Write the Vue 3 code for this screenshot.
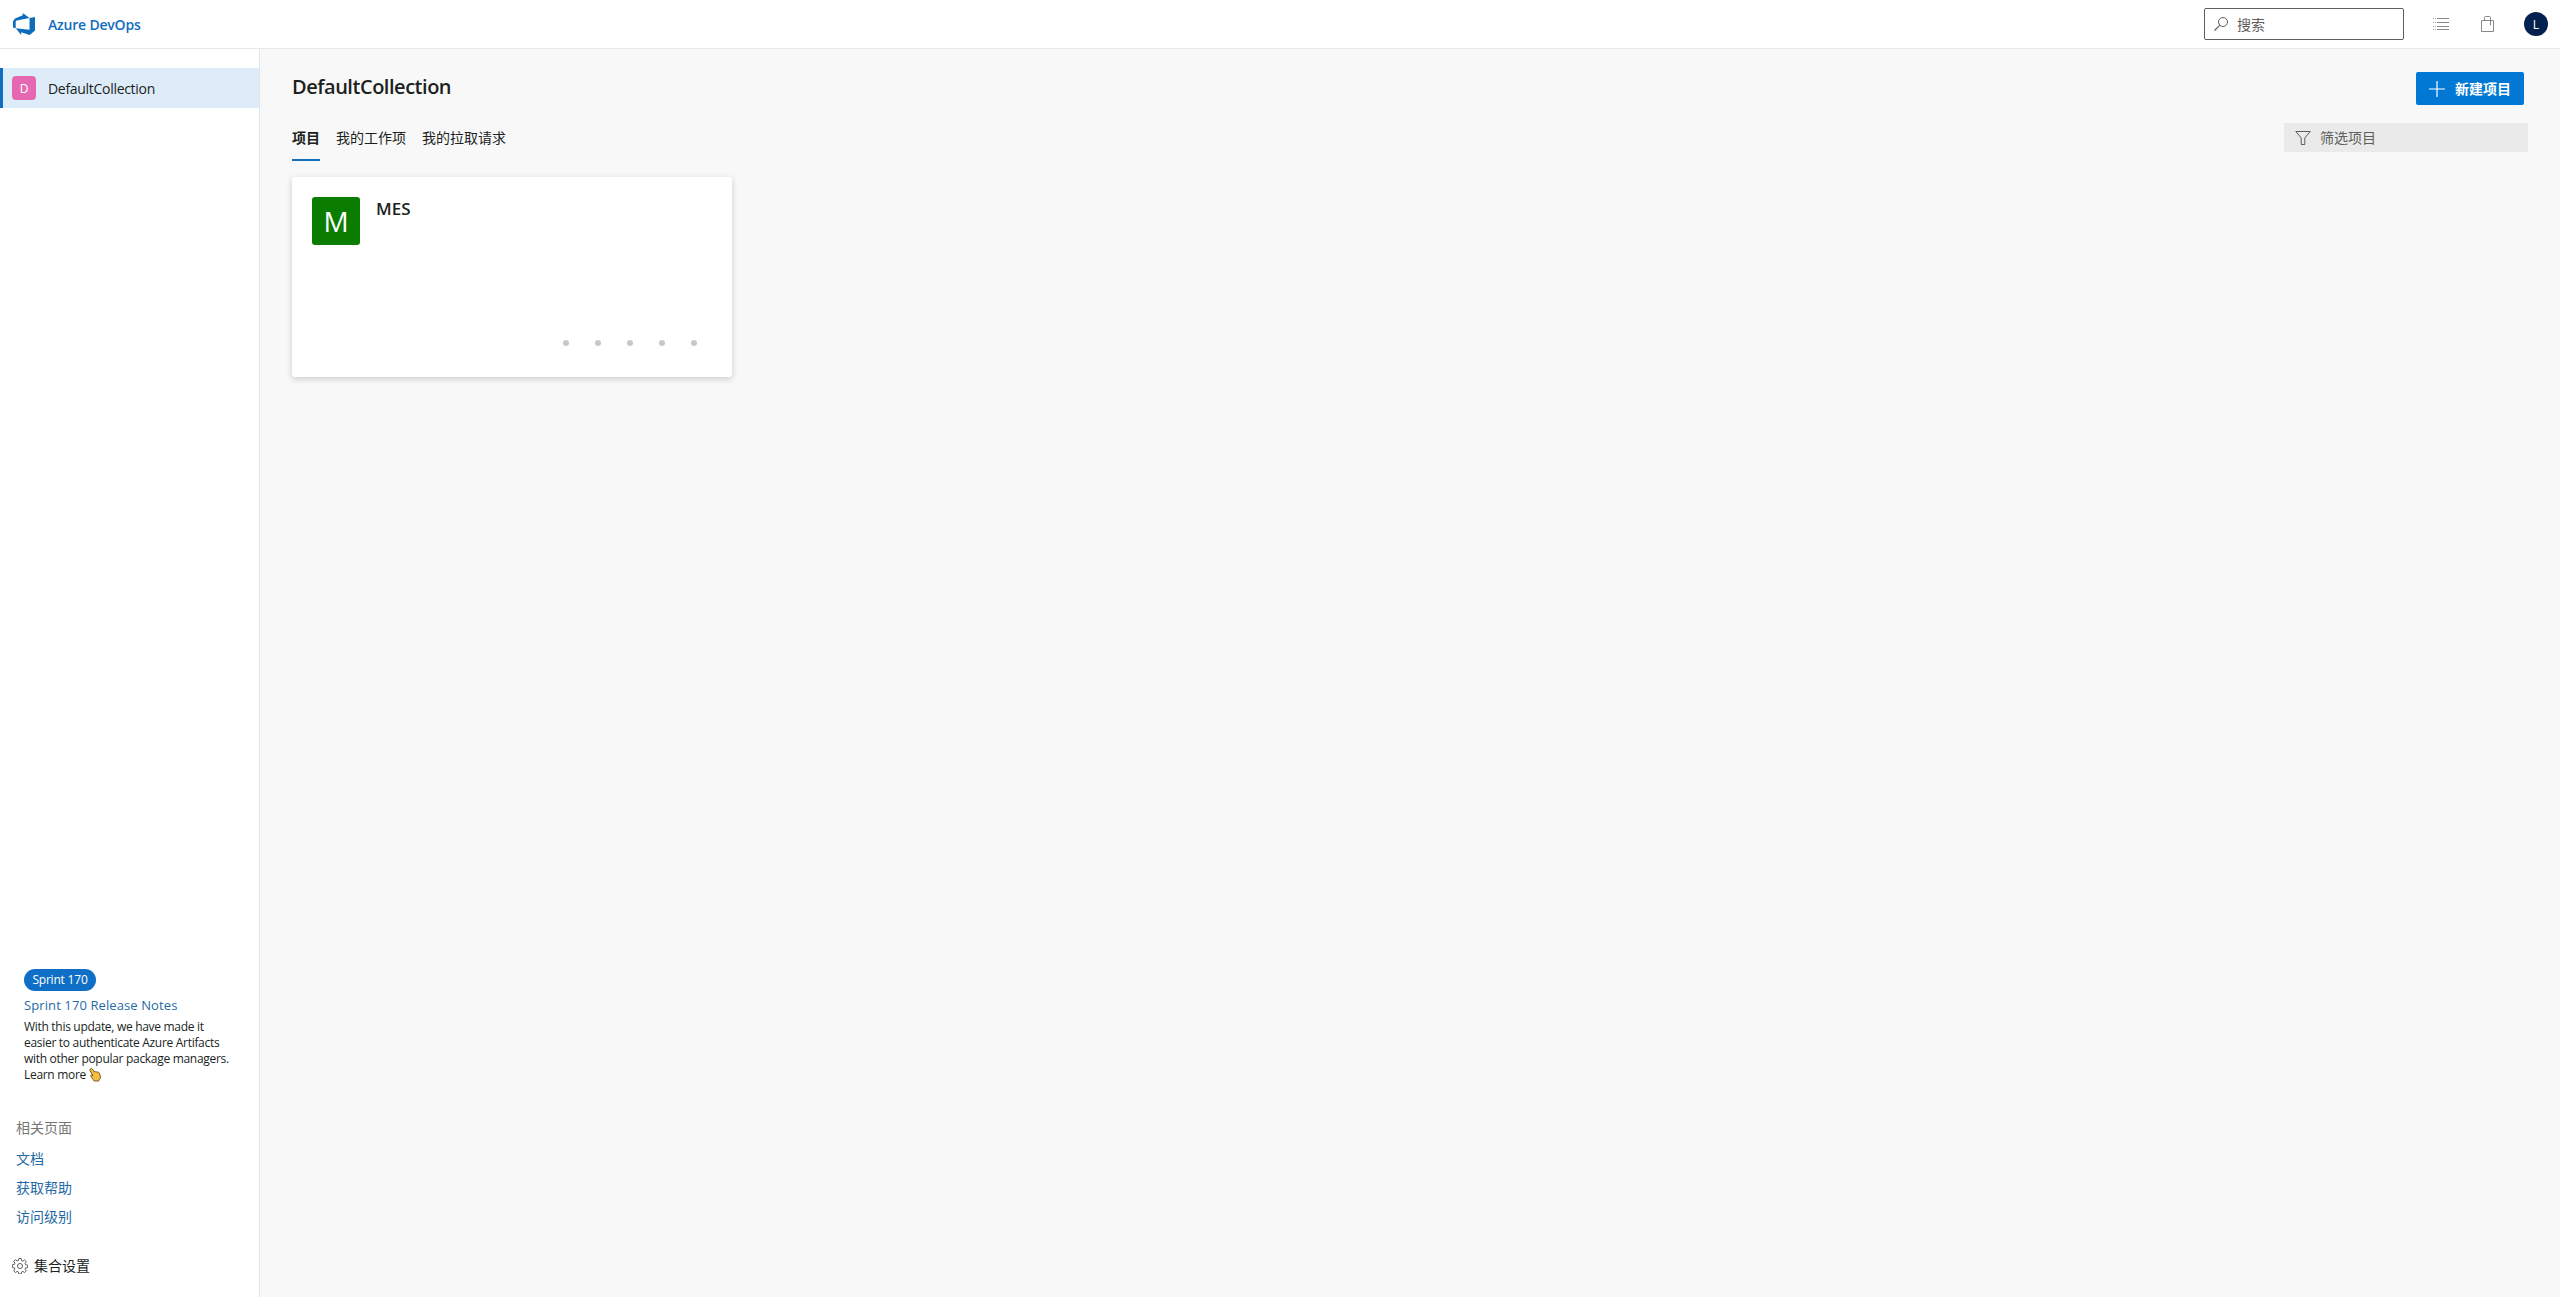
<template>
    <div class="page">
        <header class="topbar">
            <div class="brand">
                <svg class="logo" viewBox="0 0 24 24" width="22" height="22">
                    <path fill="#0f6cbd" d="M0 8.877L2.247 5.91l8.405-3.416V.022l7.37 5.393L2.966 8.338v8.225L0 15.707zm24-4.45v14.651l-5.753 4.9-9.303-3.057v3.056l-5.978-7.416 15.057 1.798V5.415z" />
                </svg>
                <span class="brand-name">Azure DevOps</span>
            </div>
            <div class="top-right">
                <div class="search">
                    <svg viewBox="0 0 16 16" width="16" height="16">
                        <circle cx="10" cy="6" r="4.5" fill="none" stroke="#605e5c" stroke-width="1" />
                        <path d="M6.7 9.3L1.5 14.5" stroke="#605e5c" stroke-width="1.2" fill="none" />
                    </svg>
                    <span>搜索</span>
                </div>
                <svg class="top-icon first" viewBox="0 0 16 16" width="16" height="16">
                    <path d="M4 2.5h12M4 6.5h12M4 10.5h12M4 13.5h12" stroke="#8a8886" stroke-width="1" fill="none" />
                    <path d="M0 2.5h3M0 6.5h3M0 10.5h3M0 13.5h3" stroke="#a8a6a4" stroke-width="1" fill="none" stroke-dasharray="1 1" />
                </svg>
                <svg class="top-icon second" viewBox="0 0 16 16" width="16" height="16">
                    <path d="M1.5 4.5h12v11h-12zM4.5 4.5v-3a1 1 0 0 1 1-1h4a1 1 0 0 1 1 1v8" stroke="#8a8886" fill="none" />
                </svg>
                <div class="avatar">L</div>
            </div>
        </header>

        <div class="body">
            <aside class="sidebar">
                <div class="collection-row">
                    <span class="collection-badge">D</span>
                    <span class="collection-name">DefaultCollection</span>
                </div>

                <div class="sidebar-bottom">
                    <div class="sprint">
                        <span class="sprint-pill">Sprint 170</span>
                        <a class="sprint-title">Sprint 170 Release Notes</a>
                        <p class="sprint-text">
                            With this update, we have made it easier to authenticate Azure Artifacts with other popular package managers.
                            Learn more
                            <svg class="hand" viewBox="0 0 12 15" width="12" height="15">
                                <path fill="#f4bf45" stroke="#6b4a12" stroke-width="0.9" stroke-linejoin="round" d="M1 2.2c.6-1 1.7-1 2.3-.2L5.6 5c.5-.4 1.2-.4 1.6 0 .6-.3 1.2-.2 1.6.3.6-.2 1.2 0 1.5.6l1 3.2c.3 1.3-.1 2.6-1 3.6l-.7 1.3H5.2L4 12.300 1.800 9.300c-.4-.7.3-1.500 1.100-1.200L4 8.800 1.100 3.700C.9 3.200.8 2.700 1 2.200z" />
                            </svg>
                        </p>
                    </div>
                    <div class="related">
                        <div class="related-title">相关页面</div>
                        <a v-for="link in links" :key="link" class="related-link">{{ link }}</a>
                    </div>
                    <div class="settings">
                        <svg viewBox="0 0 16 16" width="16" height="16">
                            <circle cx="8" cy="8" r="2.5" fill="none" stroke="#605e5c" />
                            <path fill="none" stroke="#605e5c" stroke-linejoin="round" d="M6.8.6h2.400l.4 2.100 1.300.5 1.700-1.200 1.700 1.700-1.200 1.700.5 1.300 2.100.4v2.400l-2.100.4-.5 1.300 1.200 1.700-1.700 1.700-1.700-1.200-1.300.5-.4 2.100H6.800l-.4-2.100-1.300-.5-1.700 1.200-1.700-1.700 1.200-1.700-.5-1.300-2.100-.4V6.800l2.100-.4.5-1.300-1.200-1.700 1.700-1.700 1.700 1.200 1.300-.5z" />
                        </svg>
                        <span>集合设置</span>
                    </div>
                </div>
            </aside>

            <main class="main">
                <div class="title-row">
                    <h1>DefaultCollection</h1>
                    <button class="new-btn">
                        <svg viewBox="0 0 16 16" width="16" height="16">
                            <path d="M8 0v16M0 8h16" stroke="#fff" stroke-width="1.2" fill="none" />
                        </svg>
                        <span>新建项目</span>
                    </button>
                </div>

                <div class="tabs-row">
                    <div class="tabs">
                        <div v-for="(tab, i) in tabs" :key="tab" class="tab" :class="{ active: i === 0 }">{{ tab }}</div>
                    </div>
                    <div class="filter">
                        <svg viewBox="0 0 16 16" width="16" height="16">
                            <path d="M.8 1.500h14.400L9.800 8v6.500H6.200V8z" fill="none" stroke="#605e5c" />
                        </svg>
                        <span>筛选项目</span>
                    </div>
                </div>

                <div class="card">
                    <div class="card-head">
                        <span class="project-badge">M</span>
                        <span class="project-name">MES</span>
                    </div>
                    <div class="dots">
                        <span v-for="n in 5" :key="n" class="dot"></span>
                    </div>
                </div>
            </main>
        </div>
    </div>
</template>

<script setup>
const tabs = ['项目', '我的工作项', '我的拉取请求']
const links = ['文档', '获取帮助', '访问级别']
</script>

<style>
html, body {
    margin: 0;
    background: #f8f8f8;
}
</style>

<style scoped>
.page {
    height: 1297px;
    display: flex;
    flex-direction: column;
    overflow: hidden;
    font-family: "Open Sans", "Noto Sans CJK SC", sans-serif;
    color: #201f1e;
}

.topbar {
    height: 48px;
    flex-shrink: 0;
    display: flex;
    align-items: center;
    justify-content: space-between;
    background: #fff;
    border-bottom: 1px solid #e6e6e6;
    padding: 0 12px 0 13px;
}

.brand {
    display: flex;
    align-items: center;
    gap: 13px;
}

.brand-name {
    color: #106ebe;
    font-size: 14px;
    font-weight: 600;
    letter-spacing: -0.2px;
}

.top-right {
    display: flex;
    align-items: center;
}

.search {
    width: 200px;
    height: 32px;
    display: flex;
    align-items: center;
    gap: 8px;
    padding: 0 0 1px 8px;
    box-sizing: border-box;
    background: #fff;
    border: 1px solid #605e5c;
    border-radius: 2px;
    font-size: 14px;
    color: #605e5c;
}

.top-icon.first {
    margin-left: 29px;
}

.top-icon.second {
    margin-left: 31px;
}

.avatar {
    width: 24px;
    height: 24px;
    margin-left: 28px;
    border-radius: 50%;
    background: #04204f;
    color: #fff;
    font-size: 12px;
    display: flex;
    align-items: center;
    justify-content: center;
}

.body {
    flex: 1;
    display: flex;
    min-height: 0;
}

.sidebar {
    width: 259px;
    flex-shrink: 0;
    display: flex;
    flex-direction: column;
    background: #fff;
    border-right: 1px solid #e6e6e6;
    padding-top: 19px;
}

.collection-row {
    height: 40px;
    display: flex;
    align-items: center;
    gap: 12px;
    padding-left: 9px;
    background: #deecf9;
    border-left: 3px solid #106ebe;
    font-size: 14px;
}

.collection-name {
    letter-spacing: -0.3px;
}

.collection-badge {
    width: 24px;
    height: 24px;
    border-radius: 4px;
    background: #e668b3;
    color: #fff;
    font-size: 12px;
    display: flex;
    align-items: center;
    justify-content: center;
}

.sidebar-bottom {
    margin-top: auto;
    padding-bottom: 21px;
}

.sprint {
    padding-left: 24px;
}

.sprint-pill {
    display: block;
    width: 72px;
    height: 22px;
    line-height: 22px;
    text-align: center;
    border-radius: 11px;
    background: #0f6fc6;
    color: #fff;
    font-size: 12px;
    letter-spacing: -0.2px;
}

.sprint-title {
    display: block;
    margin-top: 4px;
    color: #1f6aa5;
    font-size: 13px;
    line-height: 20px;
    letter-spacing: 0.1px;
}

.sprint-text {
    margin: 4px 0 0;
    width: 212px;
    font-size: 12px;
    line-height: 16px;
    letter-spacing: -0.3px;
}

.hand {
    vertical-align: -3px;
}

.related {
    margin-top: 35px;
    padding-left: 16px;
}

.related-title {
    font-size: 14px;
    color: #797775;
    line-height: 20px;
    margin-bottom: 11px;
}

.related-link {
    display: block;
    color: #1f6aa5;
    font-size: 14px;
    line-height: 20px;
    margin-bottom: 9px;
}

.settings {
    margin-top: 29px;
    padding-left: 12px;
    display: flex;
    align-items: center;
    gap: 6px;
    font-size: 14px;
    line-height: 20px;
}

.main {
    flex: 1;
    min-width: 0;
    padding: 23px 32px 0;
}

.title-row {
    display: flex;
    justify-content: space-between;
    align-items: flex-start;
}

h1 {
    margin: 1px 0 0;
    font-size: 20px;
    font-weight: 600;
    line-height: 28px;
    letter-spacing: -0.47px;
}

.new-btn {
    display: flex;
    align-items: center;
    gap: 10px;
    height: 33px;
    width: 108px;
    margin-right: 4px;
    padding: 0 0 0 13px;
    border: none;
    border-radius: 2px;
    background: #0078d4;
    color: #fff;
    font: 600 14px/20px "Open Sans", "Noto Sans CJK SC", sans-serif;
}

.tabs-row {
    display: flex;
    justify-content: space-between;
    align-items: flex-start;
    margin-top: 18px;
}

.tabs {
    display: flex;
    gap: 16px;
}

.tab {
    height: 38px;
    line-height: 29px;
    font-size: 14px;
    box-sizing: border-box;
}

.tab.active {
    font-weight: 600;
    border-bottom: 2px solid #106ebe;
}

.filter {
    width: 244px;
    height: 29px;
    display: flex;
    align-items: center;
    gap: 9px;
    padding: 0 0 2px 11px;
    box-sizing: border-box;
    background: #eaeaea;
    font-size: 14px;
    color: #605e5c;
}

.filter svg {
    margin-top: 2px;
}

.card {
    width: 440px;
    height: 200px;
    margin-top: 16px;
    box-sizing: border-box;
    padding: 20px;
    background: #fff;
    border-radius: 3px;
    box-shadow: 0 2px 6px rgba(0, 0, 0, 0.18);
    display: flex;
    flex-direction: column;
    justify-content: space-between;
}

.card-head {
    display: flex;
    gap: 16px;
}

.project-badge {
    width: 48px;
    height: 48px;
    border-radius: 3px;
    background: #0a7c00;
    color: #fff;
    font-size: 28px;
    display: flex;
    align-items: center;
    justify-content: center;
}

.project-name {
    font-size: 17px;
    font-weight: 600;
    line-height: 24px;
}

.dots {
    display: flex;
    justify-content: flex-end;
    gap: 26px;
    padding-right: 15px;
    margin-bottom: 11px;
}

.dot {
    width: 6px;
    height: 6px;
    border-radius: 50%;
    background: #c8c8c8;
}
</style>
